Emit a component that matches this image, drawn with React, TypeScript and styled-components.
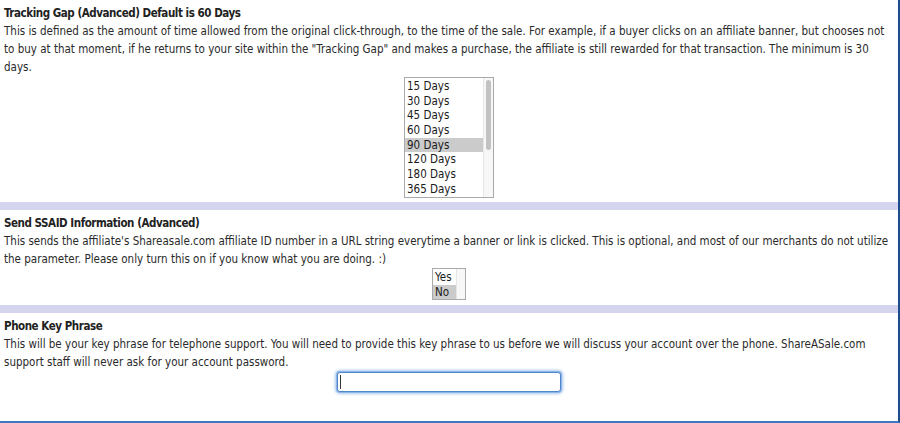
import React from "react";
import styled, { createGlobalStyle } from "styled-components";

const GlobalStyle = createGlobalStyle`
  html, body { margin: 0; padding: 0; background: #ffffff; }
  body {
    font-family: "DejaVu Sans Condensed", "DejaVu Sans", sans-serif;
    font-size: 11.5px;
    color: #262626;
  }
`;

const Page = styled.div`
  width: 898px;
  border-right: 2px solid #1d4d8c;
  border-bottom: 2px solid #3a79c2;
  background: #ffffff;
  display: flex;
  flex-direction: column;
`;

const Section = styled.section<{ $pt: number; $pb: number }>`
  padding: ${(p) => p.$pt}px 4px ${(p) => p.$pb}px 4px;
  display: flex;
  flex-direction: column;
  line-height: 18px;
`;

const Title = styled.div`
  font-weight: bold;
  color: #222;
  letter-spacing: -0.45px;
`;

const Desc = styled.div`
  color: #2a2a2a;
`;

const Center = styled.div<{ $mt?: number }>`
  display: flex;
  justify-content: center;
  margin-top: ${(p) => p.$mt ?? 0}px;
`;

const Divider = styled.div`
  height: 8px;
  background: #d5d5f0;
`;

const ListBox = styled.div<{ $w: number; $h: number }>`
  width: ${(p) => p.$w}px;
  height: ${(p) => p.$h}px;
  box-sizing: border-box;
  border: 1px solid #a9a9a9;
  display: flex;
  background: #fff;
  overflow: hidden;
`;

const Options = styled.div<{ $pt: number }>`
  flex: 1;
  display: flex;
  flex-direction: column;
  padding-top: ${(p) => p.$pt}px;
`;

const Option = styled.div<{ $sel?: boolean; $lh: number }>`
  line-height: ${(p) => p.$lh}px;
  height: ${(p) => p.$lh}px;
  padding-left: 2px;
  white-space: nowrap;
  color: #1a1a1a;
  background: ${(p) => (p.$sel ? "#cbcbcb" : "transparent")};
`;

const Track = styled.div<{ $w: number }>`
  width: ${(p) => p.$w}px;
  background: #f7f7f7;
  border-left: 1px solid #e6e6e6;
  position: relative;
  flex-shrink: 0;
`;

const Thumb = styled.div`
  position: absolute;
  left: 2px;
  top: 2px;
  width: 5px;
  height: 70px;
  border-radius: 3px;
  background: #c2c2c2;
`;

const InputWrap = styled.div`
  position: relative;
  display: flex;
`;

const KeyInput = styled.input`
  width: 224px;
  height: 20px;
  box-sizing: border-box;
  border: 1px solid #4f86c9;
  border-radius: 3px;
  box-shadow: 0 0 0 1px #8fb6e6, 0 0 3px 2px #a9c8ee;
  outline: none;
  padding: 0 3px;
  font: inherit;
  color: #222;
  caret-color: #222;
  background: #fff;
`;

const Caret = styled.span`
  position: absolute;
  left: 3px;
  top: 3px;
  width: 1px;
  height: 14px;
  background: #333;
  pointer-events: none;
`;

const gapOptions = ["15 Days", "30 Days", "45 Days", "60 Days", "90 Days", "120 Days", "180 Days", "365 Days"];

export default function App() {
  return (
    <>
      <GlobalStyle />
      <Page>
        <Section $pt={4} $pb={4}>
          <Title>Tracking Gap (Advanced) Default is 60 Days</Title>
          <Desc>
            This is defined as the amount of time allowed from the original click-through, to the time of the sale. For example, if a buyer clicks on an affiliate banner, but chooses not to buy at that moment, if he returns to your site within the "Tracking Gap" and makes a purchase, the affiliate is still rewarded for that transaction. The minimum is 30 days.
          </Desc>
          <Center $mt={1}>
            <ListBox $w={90} $h={121}>
              <Options $pt={1}>
                {gapOptions.map((o) => (
                  <Option key={o} $lh={14.7} $sel={o === "90 Days"}>
                    {o}
                  </Option>
                ))}
              </Options>
              <Track $w={9}>
                <Thumb />
              </Track>
            </ListBox>
          </Center>
        </Section>
        <Divider />
        <Section $pt={4} $pb={5}>
          <Title>Send SSAID Information (Advanced)</Title>
          <Desc>
            This sends the affiliate's Shareasale.com affiliate ID number in a URL string everytime a banner or link is clicked. This is optional, and most of our merchants do not utilize the parameter. Please only turn this on if you know what you are doing. :)
          </Desc>
          <Center>
            <ListBox $w={34} $h={32}>
              <Options $pt={1}>
                <Option $lh={15}>Yes</Option>
                <Option $lh={15} $sel>
                  No
                </Option>
              </Options>
              <Track $w={8} />
            </ListBox>
          </Center>
        </Section>
        <Divider />
        <Section $pt={4} $pb={29}>
          <Title>Phone Key Phrase</Title>
          <Desc>
            This will be your key phrase for telephone support. You will need to provide this key phrase to us before we will discuss your account over the phone. ShareASale.com support staff will never ask for your account password.
          </Desc>
          <Center $mt={1}>
            <InputWrap>
              <KeyInput type="text" aria-label="Phone Key Phrase" />
              <Caret />
            </InputWrap>
          </Center>
        </Section>
      </Page>
    </>
  );
}
